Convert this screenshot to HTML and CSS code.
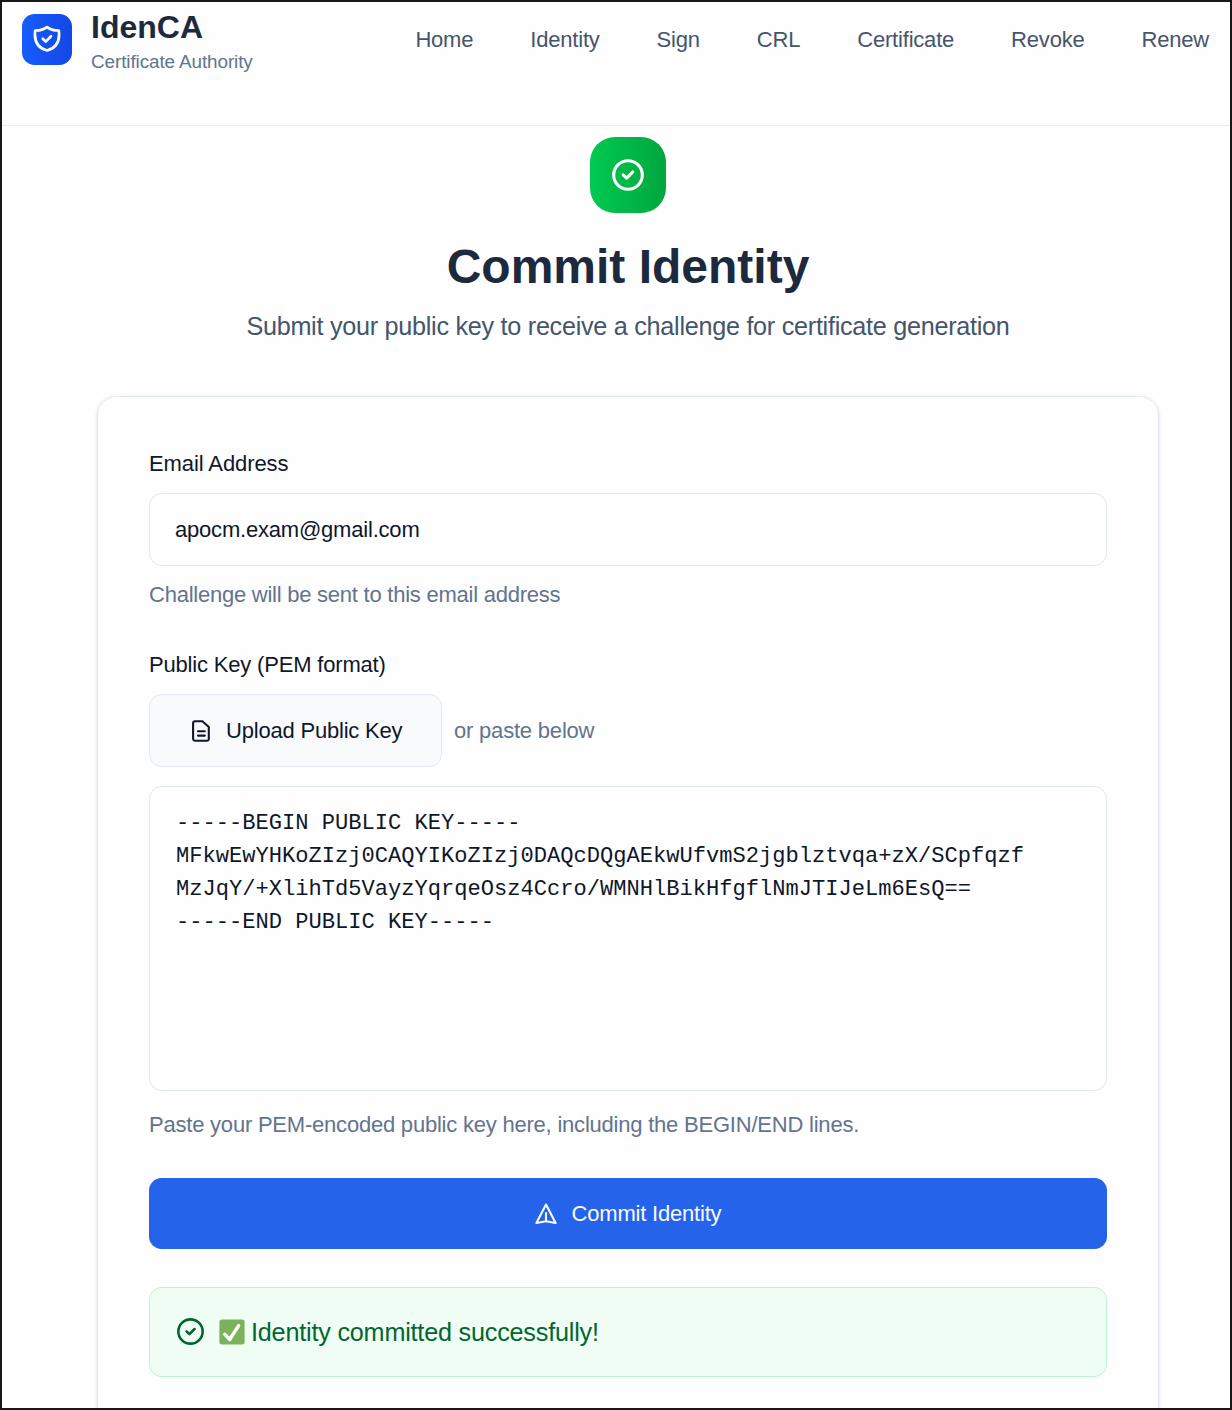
FILE: index.html
```html
<!DOCTYPE html>
<html lang="en">
<head>
<meta charset="utf-8">
<title>IdenCA</title>
<link rel="stylesheet" href="styles.css">
</head>
<body>
<div class="window">
  <header class="header">
    <div class="brand">
      <div class="logo">
        <svg class="logo-icon" viewBox="0 0 28 28" fill="none" stroke="currentColor" stroke-width="2.7" stroke-linejoin="round" stroke-linecap="round"><path d="M14 2.100C10.800 4.600 7 5.600 2.200 5.500C1 14.500 3.800 22.600 14 25.500C24.200 22.600 27 14.500 25.800 5.500C21 5.600 17.200 4.600 14 2.100Z"/><path d="M9.800 13.800l2.900 2.800 5.300-5.400"/></svg>
      </div>
      <div class="brand-text">
        <div class="brand-name">IdenCA</div>
        <div class="brand-sub">Certificate Authority</div>
      </div>
    </div>
    <nav class="nav"><a>Home</a><a>Identity</a><a>Sign</a><a>CRL</a><a>Certificate</a><a>Revoke</a><a>Renew</a></nav>
  </header>
  <main class="main">
    <div class="badge">
      <svg class="badge-icon" viewBox="0 0 32 32" fill="none" stroke="currentColor" stroke-width="3.1" stroke-linecap="round" stroke-linejoin="round"><circle cx="16" cy="16" r="14.3"/><path d="M11.2 15.800l3.500 3.400 6.100-6.200"/></svg>
    </div>
    <h1 class="title">Commit Identity</h1>
    <p class="lead">Submit your public key to receive a challenge for certificate generation</p>
    <section class="card">
      <label class="label">Email Address</label>
      <div class="field email"><span>apocm.exam@gmail.com</span></div>
      <p class="help">Challenge will be sent to this email address</p>
      <label class="label label-key">Public Key (PEM format)</label>
      <div class="upload-row">
        <div class="upload">
          <svg class="file-icon" viewBox="0 0 18 22" fill="none" stroke="currentColor" stroke-width="2.1" stroke-linecap="round" stroke-linejoin="round"><path d="M3 1.200h7.400L16.800 7v12a2 2 0 0 1-2 1.800H3a2 2 0 0 1-1.900-1.800V3.200A2 2 0 0 1 3 1.200ZM6 11.200h6.800M6 15.600h6.800"/></svg>
          <span>Upload Public Key</span>
        </div>
        <span class="paste">or paste below</span>
      </div>
      <pre class="field key">-----BEGIN PUBLIC KEY-----
MFkwEwYHKoZIzj0CAQYIKoZIzj0DAQcDQgAEkwUfvmS2jgblztvqa+zX/SCpfqzf
MzJqY/+XlihTd5VayzYqrqeOsz4Ccro/WMNHlBikHfgflNmJTIJeLm6EsQ==
-----END PUBLIC KEY-----</pre>
      <p class="help key-help">Paste your PEM-encoded public key here, including the BEGIN/END lines.</p>
      <div class="submit">
        <svg class="send-icon" viewBox="0 0 22 22" fill="none" stroke="currentColor" stroke-width="2.1" stroke-linecap="round" stroke-linejoin="round"><path d="M11 1.500L1.400 20L11 18.200L20.600 20ZM11 18.200V10"/></svg>
        <span>Commit Identity</span>
      </div>
      <div class="alert">
        <svg class="alert-icon" viewBox="0 0 26 26" fill="none" stroke="currentColor" stroke-width="2.500" stroke-linecap="round" stroke-linejoin="round"><circle cx="13" cy="13" r="11.700"/><path d="M9.200 12.900l2.700 2.700 5-5"/></svg>
        <svg class="check-icon" viewBox="0 0 26 26"><rect x=".4" y=".4" width="25.200" height="25.200" rx="2.500" fill="#7cb35a"/><path d="M5.700 15.200l5 5.300L19.600 6.600" fill="none" stroke="#fff" stroke-width="3.400" stroke-linecap="round" stroke-linejoin="round"/></svg>
        <span>Identity committed successfully!</span>
      </div>
    </section>
  </main>
</div>
</body>
</html>
```
FILE: styles.css
```css
* { box-sizing: border-box; }
body { margin: 0; background: #fff; font: 22px/33px "Liberation Sans", Arial, sans-serif; color: #0f172a; letter-spacing: -.2px; font-feature-settings: "liga" 1; }
p, h1, pre { margin: 0; }
svg { display: block; flex: none; }
.window { height: 1410px; border: 2px solid #18181b; overflow: hidden; background: #fefefe; }
.header { height: 124px; padding: 0 21px 0 20px; border-bottom: 1px solid #ebedef; display: flex; justify-content: space-between; align-items: flex-start; }
.brand { display: flex; gap: 19px; }
.logo { width: 50px; height: 51px; margin-top: 12px; padding-bottom: 2px; border-radius: 12.5px; background: linear-gradient(90deg, #155dfc, #1447e6); color: #fff; display: grid; place-items: center; }
.logo-icon { width: 28px; height: 28px; }
.brand-text { padding-top: 7px; }
.brand-name { font-size: 32px; line-height: 36px; font-weight: 700; letter-spacing: 0; color: #1d293d; }
.brand-sub { font-size: 18.9px; line-height: 25px; padding-top: 4px; letter-spacing: -.1px; color: #62748e; }
.nav { display: flex; gap: 57px; padding-top: 21px; color: #45556c; }
.main { padding-top: 11px; display: flex; flex-direction: column; align-items: center; padding-left: 24px; }
.badge { width: 76px; height: 76px; border-radius: 25px; background: linear-gradient(90deg, #00c951, #00a63e); color: #fff; display: grid; place-items: center; }
.badge-icon { width: 32px; height: 32px; }
.title { margin-top: 25px; font-size: 48px; line-height: 57px; letter-spacing: 0; color: #1d293d; }
.lead { margin-top: 13px; font-size: 25.2px; line-height: 36px; letter-spacing: -.27px; color: #45556c; }
.card { width: 1062px; height: 1100px; flex: none; margin-top: 52px; padding: 51px; border: 1px solid #e2e8f0; border-radius: 19px; box-shadow: 0 1.5px 4px rgba(0,0,0,.1), 0 1.5px 3px -1.5px rgba(0,0,0,.1); }
.label { display: block; line-height: 32px; margin-bottom: 13px; letter-spacing: -.1px; }
.label-key { letter-spacing: -.18px; }
.field { border: 1px solid #e2e8f0; border-radius: 12.5px; padding-left: 25px; }
.email { height: 73px; display: flex; align-items: center; }
.help { color: #62748e; margin: 12px 0 38px; line-height: 33px; letter-spacing: -.24px; }
.upload-row { display: flex; align-items: center; gap: 12px; margin-bottom: 19px; }
.upload { width: 293px; height: 73px; border: 1px solid #e2e8f0; border-radius: 12.5px; background: #f8fafc; display: flex; align-items: center; padding-left: 42px; gap: 16px; }
.file-icon { width: 18px; height: 22px; }
.paste { color: #62748e; }
.key { height: 305px; padding: 20px 0 0 26px; font: 22.08px/33px "Liberation Mono", monospace; letter-spacing: 0; }
.key-help { margin: 17px 0 37px; letter-spacing: -.215px; }
.submit { height: 71px; border-radius: 12.5px; background: #2563eb; color: #f8fafc; display: flex; align-items: center; justify-content: center; gap: 15px; }
.send-icon { width: 22px; height: 22px; }
.alert { height: 90px; margin-top: 38px; border: 1px solid #b9f8cf; border-radius: 12.5px; background: #f0fdf4; color: #016630; display: flex; align-items: center; padding-left: 27px; font-size: 25.2px; }
.alert-icon { width: 27px; height: 27px; margin-top: -1px; }
.check-icon { width: 26px; height: 26px; margin: 0 6px 0 15px; }
```
